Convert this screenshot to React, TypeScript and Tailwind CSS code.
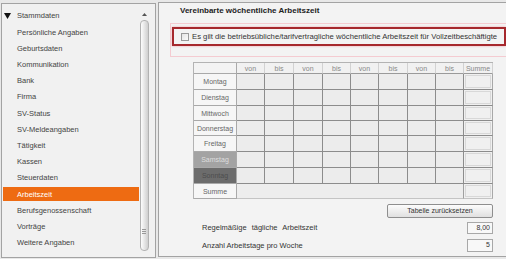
import React from "react";

const items = [
  "Persönliche Angaben",
  "Geburtsdaten",
  "Kommunikation",
  "Bank",
  "Firma",
  "SV-Status",
  "SV-Meldeangaben",
  "Tätigkeit",
  "Kassen",
  "Steuerdaten",
  "Arbeitszeit",
  "Berufsgenossenschaft",
  "Vorträge",
  "Weitere Angaben",
];

const heads = ["von", "bis", "von", "bis", "von", "bis", "von", "bis"];
const days = ["Montag", "Dienstag", "Mittwoch", "Donnerstag", "Freitag", "Samstag", "Sonntag"];

function DayLabel({ d }: { d: string }) {
  let cls = "bg-[#f6f6f6] text-[#666]";
  if (d === "Samstag") cls = "bg-[#a3a3a3] text-[#dedede]";
  if (d === "Sonntag") cls = "bg-[#6c6c6c] text-[#4c4c4c]";
  return (
    <div className={`flex items-center justify-center border-r border-b border-[#a9a9a9] ${cls}`}>{d}</div>
  );
}

export default function App() {
  return (
    <div className="w-[506px] h-[259px] bg-[#e8e8e8] overflow-hidden flex font-['Liberation_Sans',Arial,sans-serif] text-[#3a3a3a]">
      {/* Left tree panel */}
      <div className="mt-[3px] ml-[1px] w-[155px] h-[255px] border border-[#a3a3a3] bg-[#f1f1f1] flex">
        <div className="w-[137px] pt-[4px] pl-[1px] text-[7.5px]">
          <div className="h-[16.2px] flex items-center">
            <svg width="7" height="6" viewBox="0 0 7 6" className="ml-[1px]">
              <polygon points="0,0 7,0 3.5,6" fill="#111" />
            </svg>
            <span className="ml-[6px] text-[#444]">Stammdaten</span>
          </div>
          {items.map((it) =>
            it === "Arbeitszeit" ? (
              <div key={it} className="h-[16.2px] flex items-center">
                <div className="w-[136px] h-[14px] bg-[#ee6b12] text-white flex items-center pl-[14px]">{it}</div>
              </div>
            ) : (
              <div key={it} className="h-[16.2px] flex items-center pl-[14px] text-[#444]">
                {it}
              </div>
            )
          )}
        </div>
        <div className="w-[10px] flex flex-col items-center">
          <svg width="5" height="3" viewBox="0 0 5 3" className="mt-[9px]">
            <polygon points="0,3 5,3 2.5,0" fill="#555" />
          </svg>
          <div className="mt-[4px] w-[9px] h-[231px] rounded-[4px] border border-[#b2b2b2] bg-gradient-to-r from-[#fdfdfd] via-[#e6e6e6] to-[#cfcfcf] flex flex-col items-center justify-end pb-[16px] gap-[1px]">
            <div className="w-[4px] h-px bg-[#999]" />
            <div className="w-[4px] h-px bg-[#999]" />
            <div className="w-[4px] h-px bg-[#999]" />
          </div>
        </div>
      </div>

      {/* Right panel */}
      <div className="ml-[2px] mt-[2px] w-[348px] h-[255px] border-l border-t border-b border-[#a3a3a3] bg-[#f3f3f3] flex flex-col">
        <div className="mt-[2px] h-[12px] pl-[21px] text-[8px] font-bold leading-[12px] text-[#222] whitespace-nowrap">
          Vereinbarte wöchentliche Arbeitszeit
        </div>

        <div className="mt-[6px] ml-[11px] h-[34px] border-t border-l border-b border-[#f4cbd1] pt-[3px] pl-[1px]">
          <div className="h-[19px] border-2 border-[#a6282d] flex items-center pl-[7px] shadow-[0_0_2px_#f0a0a8] overflow-hidden">
            <div className="shrink-0 w-[8px] h-[8px] border border-[#9a9a9a] bg-gradient-to-br from-[#e4e4e4] to-[#fafafa]" />
            <span className="ml-[3px] text-[7.7px] text-[#333] whitespace-nowrap">
              Es gilt die betriebsübliche/tarifvertragliche wöchentliche Arbeitszeit für Vollzeitbeschäftigte
            </span>
          </div>
        </div>

        {/* Table */}
        <div className="mt-[5px] ml-[34px] w-[300px] grid grid-cols-[43px_28px_29px_29px_28px_28px_29px_28px_28px_29px] grid-rows-[11px_16px_16px_15px_15px_16px_16px_16px_15px] border-t border-l border-[#b3b3b3] text-[7px] leading-none">
          <div className="bg-[#f3f3f3] border-r border-b border-[#a9a9a9]" />
          {heads.map((h, i) => (
            <div key={i} className="bg-[#f1f1f1] border-r border-b border-r-[#d2d2d2] border-b-[#9a9a9a] flex items-center justify-center text-[#888]">
              {h}
            </div>
          ))}
          <div className="bg-[#f1f1f1] border-r border-b border-r-[#d2d2d2] border-b-[#9a9a9a] flex items-center justify-center text-[#888]">
            Summe
          </div>
          {days.map((d) => (
            <React.Fragment key={d}>
              <DayLabel d={d} />
              {heads.map((_, i) => (
                <div key={i} className="bg-[#ececec] border-r border-b border-[#8c8c8c]" />
              ))}
              <div className="bg-[#f0f0f0] border-r border-b border-r-[#a8a8a8] border-b-[#8c8c8c] p-[1px]">
                <div className="w-full h-full border border-[#d8d8d8]" />
              </div>
            </React.Fragment>
          ))}
          <div className="bg-[#f6f6f6] border-r border-b border-[#a9a9a9] flex items-center justify-center text-[#666]">
            Summe
          </div>
          <div className="col-span-8 bg-[#ededed] border-r border-b border-r-[#a0a0a0] border-b-[#c4c4c4]" />
          <div className="bg-[#f0f0f0] border-r border-b border-r-[#a8a8a8] border-b-[#c4c4c4] p-[1px]">
            <div className="w-full h-full border border-[#d8d8d8]" />
          </div>
        </div>

        <div className="mt-[5px] ml-[228px] w-[106px] h-[14px] rounded-[2px] border border-[#8e8e8e] bg-gradient-to-b from-[#fcfcfc] to-[#e0e0e0] flex items-center justify-center text-[7px] text-[#333]">
          Tabelle zurücksetzen
        </div>

        <div className="mt-[4px] h-[12px] flex items-center pl-[43px] pr-[13px] text-[7.5px] text-[#333]">
          <span className="[word-spacing:3px]">Regelmäßige tägliche Arbeitszeit</span>
          <div className="ml-auto w-[26px] h-[12px] border border-[#a8a8a8] bg-[#f8f8f8] flex items-center justify-end pr-[2px] text-[7px]">
            8,00
          </div>
        </div>
        <div className="mt-[5px] h-[13px] flex items-center pl-[43px] pr-[13px] text-[7.5px] text-[#333]">
          <span>Anzahl Arbeitstage pro Woche</span>
          <div className="ml-auto w-[26px] h-[13px] border border-[#a8a8a8] bg-[#f8f8f8] flex items-center justify-end pr-[2px] text-[7px]">
            5
          </div>
        </div>
      </div>
    </div>
  );
}
